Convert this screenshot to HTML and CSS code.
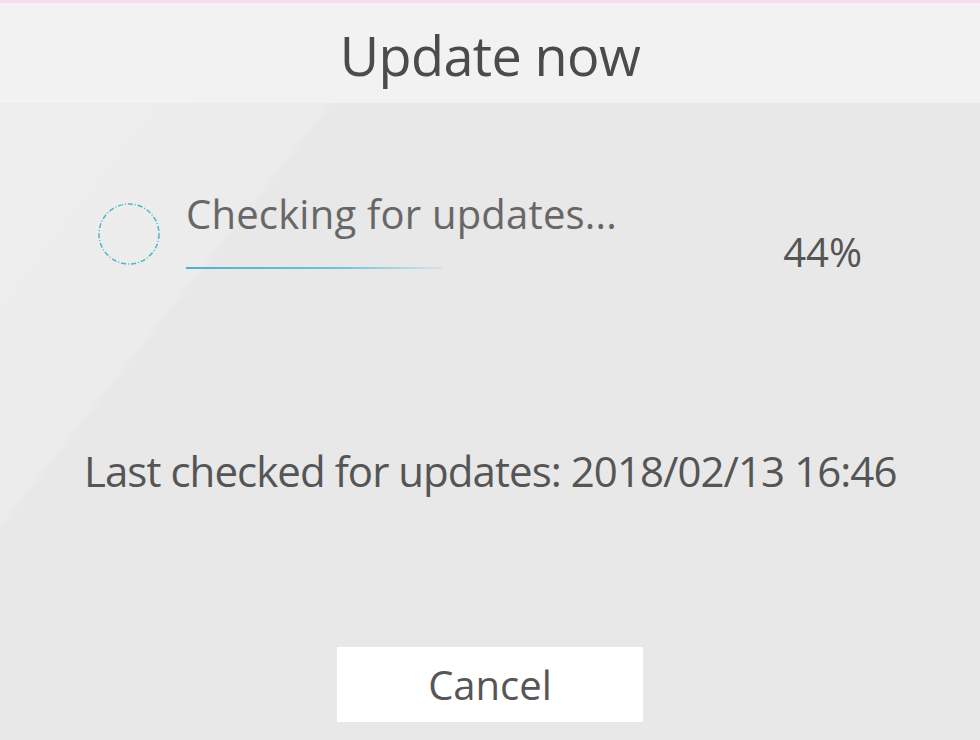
FILE: index.html
```html
<!DOCTYPE html>
<html lang="en">
<head>
    <meta charset="UTF-8">
    <meta name="viewport" content="width=device-width, initial-scale=1.0">
    <title>Update now</title>
    <link rel="stylesheet" href="styles.css">
</head>
<body>
    <div class="dialog">
        <h1 class="title">Update now</h1>
        <div class="content">
            <div class="progress-row">
                <svg class="spinner" width="66" height="66" viewBox="0 0 66 66">
                    <circle cx="33" cy="33" r="30" fill="none" stroke="#4db6cf" stroke-width="1.5" stroke-dasharray="5 2 1 2"/>
                </svg>
                <div class="status">
                    <div class="status-text">Checking for updates...</div>
                    <div class="bar"></div>
                </div>
                <div class="percent">44%</div>
            </div>
            <p class="last-checked">Last checked for updates: 2018/02/13 16:46</p>
            <div class="buttons">
                <button type="button" class="cancel">Cancel</button>
            </div>
        </div>
    </div>
</body>
</html>
```

FILE: styles.css
```css
html, body {
    margin: 0;
    padding: 0;
}
body {
    width: 980px;
    height: 740px;
    overflow: hidden;
    font-family: "Open Sans", "Noto Sans", sans-serif;
    background: #e8e8e8;
}
.dialog {
    height: 740px;
    border-top: 3px solid #f7dcef;
    box-sizing: border-box;
    background: linear-gradient(128deg, #eeeeee 0%, #ececec 26%, #e8e8e8 26.6%, #e8e8e8 100%);
}
.title {
    margin: 0;
    height: 100px;
    background: #f2f2f3;
    font-size: 54px;
    font-weight: 400;
    color: #4a4b4d;
    text-align: center;
    line-height: 104px;
    letter-spacing: -0.6px;
}
.content {
    padding: 0 84px;
}
.progress-row {
    display: flex;
    align-items: flex-start;
    padding-top: 96px;
    height: 160px;
    box-sizing: border-box;
}
.spinner {
    margin-left: 12px;
    margin-top: 2px;
}
.status {
    margin-left: 24px;
    width: 460px;
}
.status-text {
    font-size: 40px;
    color: #676767;
    line-height: 42px;
    margin-top: -6px;
    letter-spacing: 0.2px;
    white-space: nowrap;
}
.bar {
    margin-top: 32px;
    width: 256px;
    height: 2px;
    background: linear-gradient(90deg, #4cb3ce 0%, #6cc4db 60%, rgba(140, 210, 230, 0.2) 100%);
}
.percent {
    margin-left: auto;
    margin-right: 34px;
    margin-top: 32px;
    font-size: 40px;
    color: #555555;
    line-height: 42px;
}
.last-checked {
    margin: 0;
    padding-top: 183px;
    font-size: 42px;
    line-height: 50px;
    color: #555556;
    white-space: nowrap;
    letter-spacing: -0.95px;
}
.buttons {
    text-align: center;
    margin-top: 151px;
}
.cancel {
    width: 306px;
    height: 75px;
    border: none;
    background: #ffffff;
    font-family: "Open Sans", "Noto Sans", sans-serif;
    font-size: 40px;
    color: #565656;
    padding: 0;
    cursor: pointer;
}
```
